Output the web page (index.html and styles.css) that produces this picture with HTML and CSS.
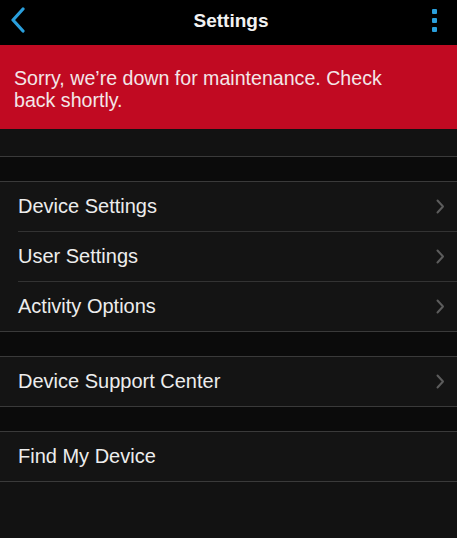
FILE: index.html
```html
<!DOCTYPE html>
<html lang="en">
<head>
  <meta charset="UTF-8">
  <meta name="viewport" content="width=device-width, initial-scale=1.0">
  <title>Settings</title>
  <link rel="stylesheet" href="styles.css">
</head>
<body>
<div id="header">
  <button class="nav-btn back-btn" type="button" aria-label="Back">
    <svg width="16" height="26" viewBox="0 0 16 26">
      <path d="M13 2 L3 13 L13 24" fill="none" stroke="#2a9fdc" stroke-width="3.2" stroke-linecap="round" stroke-linejoin="round"/>
    </svg>
  </button>
  <h1 class="title">Settings</h1>
  <button class="nav-btn menu-btn" type="button" aria-label="More">
    <span class="dot"></span>
    <span class="dot"></span>
    <span class="dot"></span>
  </button>
</div>

<div id="banner">
  <p>Sorry, we&rsquo;re down for maintenance. Check back shortly.</p>
</div>

<div id="list">
  <div class="group group-top"></div>

  <div class="group">
    <div class="row">Device Settings <span class="chevron"></span></div>
    <div class="row">User Settings <span class="chevron"></span></div>
    <div class="row">Activity Options <span class="chevron"></span></div>
  </div>

  <div class="group">
    <div class="row">Device Support Center <span class="chevron"></span></div>
  </div>

  <div class="group">
    <div class="row">Find My Device</div>
  </div>
</div>

<div class="filler"></div>

<script>
  // chevrons are the same everywhere, so fill them in once
  var chevron = '<svg width="9" height="15" viewBox="0 0 9 15"><path d="M1.5 1.5 L7 7.5 L1.5 13.5" fill="none" stroke="#5c5c5c" stroke-width="2" stroke-linecap="round" stroke-linejoin="round"/></svg>';
  document.querySelectorAll('.chevron').forEach(function (el) {
    el.innerHTML = chevron;
  });
</script>
</body>
</html>
```

FILE: styles.css
```css
body {
  margin: 0;
  min-height: 100vh;
  display: flex;
  flex-direction: column;
  background-color: #0b0b0b;
  font-family: "Liberation Sans", Arial, sans-serif;
  color: #ededed;
}

#header {
  height: 45px;
  flex-shrink: 0;
  background-color: #000;
  display: grid;
  grid-template-columns: 1fr auto 1fr;
  align-items: center;
  padding: 0 12px 0 7px;
}

.title {
  margin: 0 0 0 10px;
  font-size: 19px;
  font-weight: bold;
  color: #f2f2f2;
  padding-bottom: 4px;
}

.nav-btn {
  background: none;
  border: none;
  padding: 0;
  width: 22px;
  height: 40px;
  display: flex;
  flex-direction: column;
  align-items: center;
  justify-content: center;
  margin-bottom: 5px;
}

.menu-btn {
  justify-self: end;
  gap: 4px;
}

.dot {
  width: 5px;
  height: 5px;
  border-radius: 1px;
  background-color: #2a9fdc;
}

#banner {
  background-color: #c10a22;
  padding: 22px 14px 18px;
  height: 44px;
  flex-shrink: 0;
}

#banner p {
  margin: 0;
  font-size: 19.6px;
  line-height: 22px;
  color: #f3e6e8;
  max-width: 400px;
}

#list {
  display: flex;
  flex-direction: column;
  gap: 24px;
  flex-shrink: 0;
}

.group {
  background-color: #141414;
  border-top: 1px solid #3a3a3a;
  border-bottom: 1px solid #3a3a3a;
}

/* the row hidden behind the banner */
.group-top {
  height: 27px;
  border-top: none;
  background-color: #121212;
}

.row {
  height: 49px;
  margin-left: 18px;
  padding-right: 12px;
  display: flex;
  align-items: center;
  justify-content: space-between;
  font-size: 20px;
  border-bottom: 1px solid #333;
}

.row:last-child {
  border-bottom: none;
}

.chevron {
  display: flex;
}

.filler {
  flex: 1;
  background-color: #121212;
}
```
